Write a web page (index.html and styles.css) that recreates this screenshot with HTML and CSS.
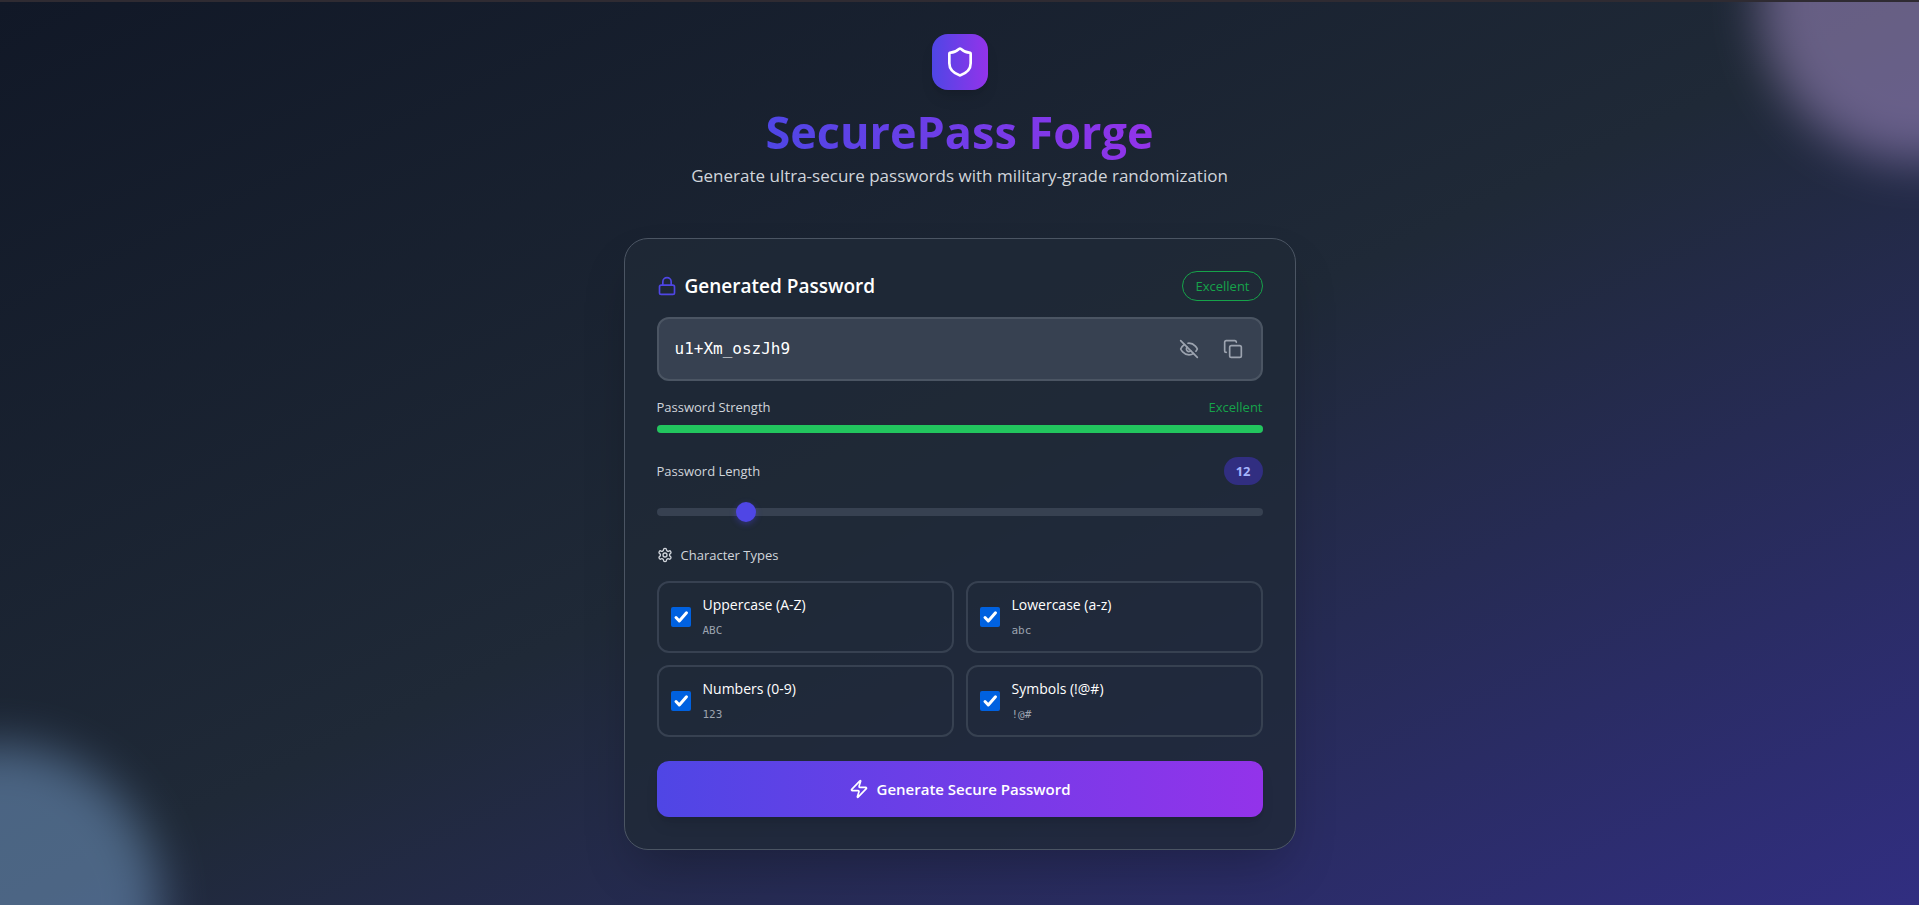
FILE: index.html
```html
<!DOCTYPE html>
<html lang="en">
<head>
<meta charset="utf-8">
<meta name="viewport" content="width=device-width, initial-scale=1">
<title>SecurePass Forge</title>
<link rel="stylesheet" href="styles.css">
</head>
<body>
<div class="page">
  <div class="blob blob-purple"></div>
  <div class="blob blob-blue"></div>

  <main class="content">
    <header class="hero">
      <div class="logo">
        <svg class="icon" width="32" height="32" viewBox="0 0 24 24" aria-hidden="true"><path d="M20 13c0 5-3.500 7.500-7.660 8.950a1 1 0 0 1-.67-.01C7.500 20.500 4 18 4 13V6a1 1 0 0 1 1-1c2 0 4.500-1.200 6.240-2.720a1.170 1.170 0 0 1 1.520 0C14.510 3.810 17 5 19 5a1 1 0 0 1 1 1z"/></svg>
      </div>
      <h1 class="title">SecurePass Forge</h1>
      <p class="subtitle">Generate ultra-secure passwords with military-grade randomization</p>
    </header>

    <section class="card">
      <div class="row card-head">
        <h2 class="card-title">
          <svg class="icon lock" width="20" height="20" viewBox="0 0 24 24" aria-hidden="true"><rect width="18" height="11" x="3" y="11" rx="2"/><path d="M7 11V7a5 5 0 0 1 10 0v4"/></svg>
          <label for="password">Generated Password</label>
        </h2>
        <span class="badge">Excellent</span>
      </div>

      <div class="field">
        <input class="password" id="password" type="text" value="u1+Xm_oszJh9" readonly>
        <button class="icon-button" type="button" aria-label="Hide password">
          <svg class="icon" width="20" height="20" viewBox="0 0 24 24" aria-hidden="true"><path d="M9.880 9.880a3 3 0 1 0 4.240 4.240"/><path d="M10.730 5.080A10.430 10.430 0 0 1 12 5c7 0 10 7 10 7a13.160 13.160 0 0 1-1.670 2.680"/><path d="M6.610 6.610A13.526 13.526 0 0 0 2 12s3 7 10 7a9.740 9.740 0 0 0 5.390-1.610"/><path d="M2 2l20 20"/></svg>
        </button>
        <button class="icon-button" type="button" aria-label="Copy password">
          <svg class="icon" width="20" height="20" viewBox="0 0 24 24" aria-hidden="true"><rect width="14" height="14" x="8" y="8" rx="2"/><path d="M4 16c-1.100 0-2-.9-2-2V4c0-1.100.9-2 2-2h10c1.100 0 2 .9 2 2"/></svg>
        </button>
      </div>

      <div class="strength">
        <div class="row label-text"><span>Password Strength</span><span class="rating">Excellent</span></div>
        <div class="meter"><div class="meter-fill"></div></div>
      </div>

      <div class="length">
        <div class="row label-text"><label for="length">Password Length</label><output class="count" for="length">12</output></div>
        <input class="range" id="length" type="range" min="6" max="50" value="12">
      </div>

      <fieldset class="types">
        <legend class="legend label-text">
          <svg class="icon" width="16" height="16" viewBox="0 0 24 24" aria-hidden="true"><path d="M12.220 2h-.44a2 2 0 0 0-2 2v.18a2 2 0 0 1-1 1.730l-.43.25a2 2 0 0 1-2 0l-.15-.08a2 2 0 0 0-2.730.73l-.22.38a2 2 0 0 0 .73 2.730l.15.1a2 2 0 0 1 1 1.720v.51a2 2 0 0 1-1 1.740l-.15.09a2 2 0 0 0-.73 2.730l.22.38a2 2 0 0 0 2.730.73l.15-.08a2 2 0 0 1 2 0l.43.25a2 2 0 0 1 1 1.730V20a2 2 0 0 0 2 2h.44a2 2 0 0 0 2-2v-.18a2 2 0 0 1 1-1.730l.43-.25a2 2 0 0 1 2 0l.15.08a2 2 0 0 0 2.730-.73l.22-.39a2 2 0 0 0-.73-2.730l-.15-.08a2 2 0 0 1-1-1.740v-.5a2 2 0 0 1 1-1.740l.15-.09a2 2 0 0 0 .73-2.730l-.22-.38a2 2 0 0 0-2.730-.73l-.15.08a2 2 0 0 1-2 0l-.43-.25a2 2 0 0 1-1-1.730V4a2 2 0 0 0-2-2z"/><circle cx="12" cy="12" r="3"/></svg>
          Character Types
        </legend>
        <div class="options">
          <label class="option">
            <span class="check"><input class="box" type="checkbox" checked><svg class="tick" viewBox="0 0 20 20" aria-hidden="true"><path d="M5 10.500L8.300 14L15.500 5.800"/></svg></span>
            <span class="option-text"><span class="name">Uppercase (A-Z)</span><span class="sample">ABC</span></span>
          </label>
          <label class="option">
            <span class="check"><input class="box" type="checkbox" checked><svg class="tick" viewBox="0 0 20 20" aria-hidden="true"><path d="M5 10.500L8.300 14L15.500 5.800"/></svg></span>
            <span class="option-text"><span class="name">Lowercase (a-z)</span><span class="sample">abc</span></span>
          </label>
          <label class="option">
            <span class="check"><input class="box" type="checkbox" checked><svg class="tick" viewBox="0 0 20 20" aria-hidden="true"><path d="M5 10.500L8.300 14L15.500 5.800"/></svg></span>
            <span class="option-text"><span class="name">Numbers (0-9)</span><span class="sample">123</span></span>
          </label>
          <label class="option">
            <span class="check"><input class="box" type="checkbox" checked><svg class="tick" viewBox="0 0 20 20" aria-hidden="true"><path d="M5 10.500L8.300 14L15.500 5.800"/></svg></span>
            <span class="option-text"><span class="name">Symbols (!@#)</span><span class="sample">!@#</span></span>
          </label>
        </div>
      </fieldset>

      <button class="generate" type="button">
        <svg class="icon" width="20" height="20" viewBox="0 0 24 24" aria-hidden="true"><path d="M4 14a1 1 0 0 1-.78-1.630l9.900-10.200a.5.5 0 0 1 .86.46l-1.920 6.020A1 1 0 0 0 13 10h7a1 1 0 0 1 .78 1.630l-9.900 10.200a.5.5 0 0 1-.86-.46l1.920-6.020A1 1 0 0 0 11 14z"/></svg>
        Generate Secure Password
      </button>
    </section>
  </main>
</div>
</body>
</html>
```
FILE: styles.css
```css
*, *::before, *::after {
  box-sizing: border-box;
}

body {
  margin: 0;
  font-family: "Segoe UI", "Open Sans", "Noto Sans", sans-serif;
  color: #fff;
  background: #111827;
}

h1, h2, p, fieldset, legend {
  margin: 0;
  padding: 0;
  border: 0;
}

button, input {
  font: inherit;
  color: inherit;
}

.page {
  position: relative;
  min-height: 100vh;
  overflow: hidden;
  border-top: 2px solid #2f2b32;
  background: linear-gradient(to bottom right, #111827, #1f2937, #312e81);
}

.blob {
  position: absolute;
  width: 320px;
  height: 320px;
  border-radius: 50%;
  filter: blur(24px);
  opacity: 0.39;
}

.blob-purple {
  top: -160px;
  right: -160px;
  background: #d8b4fe;
}

.blob-blue {
  bottom: -160px;
  left: -160px;
  background: #93c5fd;
}

.icon {
  display: block;
  flex: none;
  fill: none;
  stroke: currentColor;
  stroke-width: 2;
  stroke-linecap: round;
  stroke-linejoin: round;
}

.content {
  position: relative;
  max-width: 704px;
  margin: 0 auto;
  padding: 32px 16px;
}

.hero {
  display: flex;
  flex-direction: column;
  align-items: center;
  margin-bottom: 48px;
  text-align: center;
}

.logo {
  padding: 12px;
  margin-bottom: 16px;
  border-radius: 16px;
  background: linear-gradient(to right, #4f46e5, #9333ea);
  box-shadow: 0 10px 15px -3px rgb(0 0 0 / 10%), 0 4px 6px -4px rgb(0 0 0 / 10%);
}

.title {
  padding-bottom: 4px;
  font-size: 45px;
  font-weight: 700;
  line-height: 52px;
  color: transparent;
  background: linear-gradient(to right, #4f46e5, #9333ea);
  background-clip: text;
  -webkit-background-clip: text;
}

.subtitle {
  font-size: 17px;
  line-height: 28px;
  color: #d1d5db;
}

.card {
  padding: 32px;
  border: 1px solid #4b5563;
  border-radius: 24px;
  background: rgb(31 41 55 / 80%);
  box-shadow: 0 25px 50px -12px rgb(0 0 0 / 25%);
}

.row {
  display: flex;
  align-items: center;
  justify-content: space-between;
}

.card-head {
  margin-bottom: 16px;
}

.card-title {
  display: flex;
  align-items: center;
  gap: 8px;
  font-size: 19px;
  font-weight: 600;
  line-height: 28px;
}

.lock {
  color: #4f46e5;
}

.badge {
  padding: 4px 12px;
  border: 1px solid #16a34a;
  border-radius: 15px;
  font-size: 13px;
  line-height: 20px;
  color: #16a34a;
}

.field {
  display: flex;
  align-items: center;
  gap: 8px;
  height: 64px;
  padding: 0 10px 0 16px;
  border: 2px solid #4b5563;
  border-radius: 12px;
  background: #374151;
}

.password {
  flex: 1;
  min-width: 0;
  padding: 0;
  border: 0;
  outline: 0;
  background: none;
  font-family: Consolas, "DejaVu Sans Mono", monospace;
  font-size: 16px;
  line-height: 28px;
}

.icon-button {
  padding: 8px;
  border: 0;
  background: none;
  color: #9ca3af;
}

.label-text {
  font-size: 13px;
  line-height: 20px;
  color: #d1d5db;
}

.strength {
  margin: 16px 0 24px;
}

.rating {
  color: #16a34a;
}

.meter {
  height: 8px;
  margin-top: 8px;
  border-radius: 4px;
  background: #374151;
}

.meter-fill {
  height: 100%;
  border-radius: 4px;
  background: #22c55e;
}

.count {
  padding: 4px 12px;
  border-radius: 14px;
  font-size: 13px;
  font-weight: 700;
  color: #a5b4fc;
  background: #312e81;
}

.range {
  display: block;
  width: 100%;
  height: 22px;
  margin: 16px 0 22px;
  appearance: none;
  background: none;
}

.range::-webkit-slider-runnable-track {
  height: 8px;
  border-radius: 4px;
  background: #374151;
}

.range::-webkit-slider-thumb {
  appearance: none;
  width: 20px;
  height: 20px;
  margin-top: -6px;
  border-radius: 50%;
  background: #4f46e5;
  box-shadow: 0 2px 6px rgb(79 70 229 / 40%);
}

.legend {
  display: flex;
  align-items: center;
  gap: 8px;
  margin-bottom: 16px;
}

.options {
  display: grid;
  grid-template-columns: 1fr 1fr;
  gap: 12px;
}

.option {
  display: flex;
  align-items: center;
  gap: 12px;
  padding: 12px;
  border: 2px solid #374151;
  border-radius: 12px;
}

.check {
  display: grid;
  width: 20px;
  height: 20px;
}

.box {
  grid-area: 1 / 1;
  width: 20px;
  height: 20px;
  margin: 0;
  appearance: none;
  border-radius: 2px;
}

.box:checked {
  background: #0061e0;
}

.tick {
  grid-area: 1 / 1;
  visibility: hidden;
  fill: none;
  stroke: #fff;
  stroke-width: 3;
  stroke-linecap: round;
  stroke-linejoin: round;
  pointer-events: none;
}

.box:checked + .tick {
  visibility: visible;
}

.option-text {
  display: grid;
  gap: 8px;
}

.name {
  font-size: 14px;
  line-height: 20px;
}

.sample {
  font-family: Consolas, "DejaVu Sans Mono", monospace;
  font-size: 11px;
  line-height: 16px;
  color: #9ca3af;
}

.generate {
  display: flex;
  align-items: center;
  justify-content: center;
  gap: 8px;
  width: 100%;
  margin-top: 24px;
  padding: 16px;
  border: 0;
  border-radius: 12px;
  font-size: 15px;
  font-weight: 600;
  line-height: 24px;
  background: linear-gradient(to right, #4f46e5, #9333ea);
  box-shadow: 0 10px 15px -3px rgb(0 0 0 / 10%), 0 4px 6px -4px rgb(0 0 0 / 10%);
}
```
